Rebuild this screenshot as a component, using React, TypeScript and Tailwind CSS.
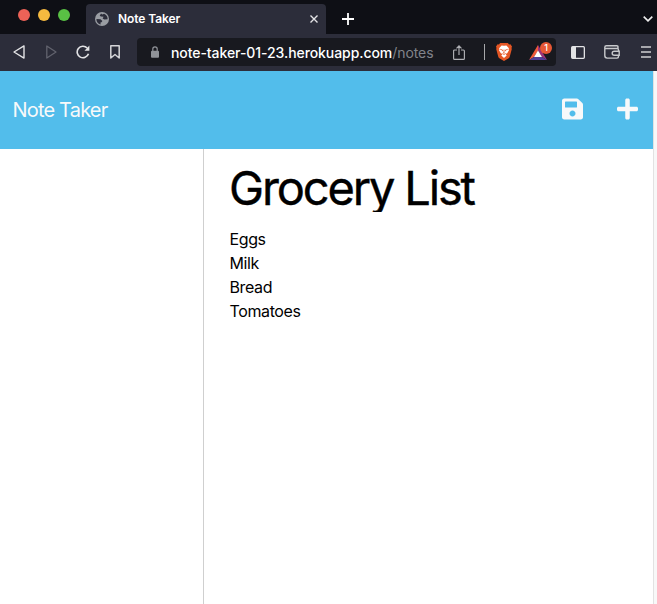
import React from "react";
import { FaPlus, FaSave } from "react-icons/fa";

const lines = ["Eggs", "Milk", "Bread", "Tomatoes"];

function Globe() {
  return (
    <svg className="ml-[9px] block shrink-0" width="14" height="14" viewBox="0 0 14 14">
      <circle cx="7" cy="7" r="7" fill="#9a9da3" />
      <path d="M6.1 1.4 4.7 3.5 5.8 4.6 8.6 4.8 7.6 6.5 9.3 7.6 12.6 7.2A5.7 5.7 0 0 0 9.1 1.7L7.3 2.5Z" fill="#2c2d3a" />
      <path d="M1.4 7 5.5 7.3 7.4 8.9 6.5 10.3 5.5 10.5 5.6 12.6A5.8 5.8 0 0 1 1.4 7Z" fill="#2c2d3a" />
    </svg>
  );
}

function TabStrip() {
  return (
    <div className="flex h-[34px] items-end bg-[#0e0f15]">
      <div className="flex h-full w-[86px] items-center gap-2 pb-1 pl-[18px]">
        <span className="size-3 rounded-full bg-[#ec6257]" />
        <span className="size-3 rounded-full bg-[#f5b93f]" />
        <span className="size-3 rounded-full bg-[#59c144]" />
      </div>
      <div className="flex h-[30px] w-[240px] items-center rounded-t-[4px] bg-[#2c2d3a]">
        <Globe />
        <span className="ml-[9px] text-[12px] font-semibold tracking-[-0.08px] text-white">Note Taker</span>
        <svg className="ml-auto mr-2 block" width="8" height="8" viewBox="0 0 8 8" stroke="#e4e4e7" strokeWidth="1.4">
          <path d="M.5.5l7 7M7.5.5l-7 7" />
        </svg>
      </div>
      <svg className="mb-[9px] ml-4 block" width="12" height="12" viewBox="0 0 12 12" stroke="#fff" strokeWidth="1.8">
        <path d="M6 0v12M0 6h12" />
      </svg>
      <svg className="mb-3 ml-auto mr-1 block" width="10" height="6" viewBox="0 0 10 6" fill="none" stroke="#eee" strokeWidth="1.6">
        <path d="M.7.6 5 4.9 9.3.6" />
      </svg>
    </div>
  );
}

function Toolbar() {
  return (
    <div className="flex h-[37px] items-center bg-[#2c2d3a] pb-px">
      <svg className="ml-[13px] block" width="12" height="14" viewBox="0 0 12 14" fill="none" stroke="#e3e3e5" strokeWidth="1.4" strokeLinejoin="round">
        <path d="M11 .9v12.2L1 7Z" />
      </svg>
      <svg className="ml-[21px] block" width="11" height="14" viewBox="0 0 11 14" fill="none" stroke="#62636e" strokeWidth="1.3" strokeLinejoin="round">
        <path d="M.8 1v12L10 7Z" />
      </svg>
      <svg className="ml-[19px] block" width="14" height="14" viewBox="0 0 14 14" fill="none" stroke="#e3e3e5" strokeWidth="1.6">
        <path d="M11.2 3A5.8 5.8 0 1 0 12.5 8.8" />
        <path d="M13.4.6v5.1H8.5Z" fill="#e3e3e5" stroke="none" />
      </svg>
      <svg className="ml-5 block" width="10" height="14" viewBox="0 0 10 14" fill="none" stroke="#d5d5d8" strokeWidth="1.5" strokeLinejoin="round">
        <path d="M.8.8h8.4V13L5 9.5.8 13Z" />
      </svg>
      <div className="ml-[17px] flex h-7 w-[419px] items-center rounded-[4px] bg-[#18191f]">
        <svg className="ml-[14px] block" width="8" height="12" viewBox="0 0 8 12">
          <path d="M1.8 5.5V3.1a2.2 2.2 0 0 1 4.4 0v2.4" fill="none" stroke="#909399" strokeWidth="1.2" />
          <rect y="4.7" width="8" height="7" rx="1" fill="#909399" />
        </svg>
        <span className="ml-3 w-[263px] whitespace-nowrap text-[14px] font-medium tracking-[-0.07px] text-white">
          note-taker-01-23.herokuapp.com<span className="font-normal text-[#81838a]">/notes</span>
        </span>
        <svg className="ml-[19px] block shrink-0" width="12" height="15" viewBox="0 0 12 15" fill="none" stroke="#b0b1b5" strokeWidth="1.15">
          <path d="M4 5H1.6q-1 0-1 1v7.4q0 1 1 1h8.8q1 0 1-1V6q0-1-1-1H8M6 10V1M3.5 3.4 6 .9l2.5 2.5" />
        </svg>
        <span className="ml-[19px] h-4 w-px bg-[#a7a8aa]" />
        <svg className="ml-[11px] block shrink-0" width="16" height="18" viewBox="0 0 16 18">
          <path d="M4.2 0h7.6l1.4 1.4 1.2-.1L16 3.5l-.5 1.4.3 1.2-2 7.4q-.3 1.3-1.5 2.1L8 18l-4.3-2.4q-1.2-.8-1.5-2.1l-2-7.4.3-1.2L0 3.5l1.6-2.2 1.2.1Z" fill="#e45624" />
          <path d="m8 2.8 2.4-.4 2.5 2.8-.4 1 .5 1.1-1.8 3-1.6.6 1.1 1.7L8 15l-2.7-2.4 1.1-1.7-1.6-.6-1.8-3 .5-1.1-.4-1 2.5-2.8Z" fill="#fff" />
          <path d="m4.2 6.3 2.4.7-.2 1.2M11.8 6.3l-2.4.7.2 1.2M8 6.5v2.8L6.6 10.7 8 11.5l1.4-.8L8 9.3" fill="none" stroke="#e45624" strokeWidth=".8" />
        </svg>
        <div className="relative ml-[17px] h-[17px] w-[18px] shrink-0">
          <svg className="block" width="18" height="17" viewBox="0 0 18 17">
            <path d="M9 1 0 16l5-3 4-6Z" fill="#f05a3a" />
            <path d="m9 1 9 15-5-3-4-6Z" fill="#9b327a" />
            <path d="m0 16 5-3h8l5 3Z" fill="#513f98" />
            <path d="m9 6.4 4 6.6H5Z" fill="#fff" />
          </svg>
          <span className="absolute -top-[2px] left-[11px] flex size-3 items-center justify-center rounded-full bg-[#e65735] text-[9px] font-medium leading-none text-white">1</span>
        </div>
      </div>
      <svg className="ml-[15px] block" width="14" height="13" viewBox="0 0 14 13">
        <rect x=".65" y=".65" width="12.7" height="11.7" rx="1" fill="none" stroke="#e3e3e5" strokeWidth="1.3" />
        <path d="M1 1h4v11H1Z" fill="#e3e3e5" />
      </svg>
      <svg className="ml-[19px] block" width="16" height="14" viewBox="0 0 16 14" fill="none" stroke="#c8c9cc" strokeWidth="1.4">
        <path d="M14 3.5V2q0-1.2-1.2-1.2H2.4Q.8.8.8 2.2v8.4q0 2.5 2.4 2.5H13q1.5 0 1.5-1.5v-1.5M1 3.5h12.2q1.3 0 1.3 1.5v1.1" />
        <path d="M15.2 6.2h-5a2 2 0 0 0 0 4h5Z" />
      </svg>
      <svg className="ml-[21px] block" width="10" height="12" viewBox="0 0 10 12" stroke="#cfcfd2" strokeWidth="1.6">
        <path d="M0 1h10M0 6h10M0 11h10" />
      </svg>
    </div>
  );
}

export default function App() {
  return (
    <div className="flex h-[604px] w-[657px] flex-col overflow-hidden bg-white font-['Inter',sans-serif]">
      <TabStrip />
      <Toolbar />
      <div className="flex min-h-0 flex-1">
        <div className="flex min-w-0 flex-1 flex-col">
          <header className="flex h-[78px] items-center bg-[#52bdeb] pb-0.5 pl-[12.5px] pr-[15px] text-[#f8f9fa]">
            <span className="pt-[2px] text-[20px] tracking-[-0.82px]">Note Taker</span>
            <FaSave className="ml-auto mr-[34px] block h-6 w-[21px]" />
            <FaPlus className="block h-6 w-[21px]" />
          </header>
          <div className="flex flex-1">
            <aside className="w-[204px] border-r border-[#cfcfcf]" />
            <main className="flex-1 pl-[25px] pt-[15px] text-black">
              <h1 className="h-[48px] overflow-hidden whitespace-nowrap text-[47px] leading-[47px] tracking-[-2.15px] [-webkit-text-stroke:0.4px_black]">Grocery List</h1>
              <div className="mt-[15px] pl-[0.5px] text-[16px] leading-6 tracking-[-0.38px]">
                {lines.map((line) => (
                  <p key={line}>{line}</p>
                ))}
              </div>
            </main>
          </div>
        </div>
        <div className="w-1 border-l border-[#e2e2e2] bg-[#f8f8f8]" />
      </div>
    </div>
  );
}
